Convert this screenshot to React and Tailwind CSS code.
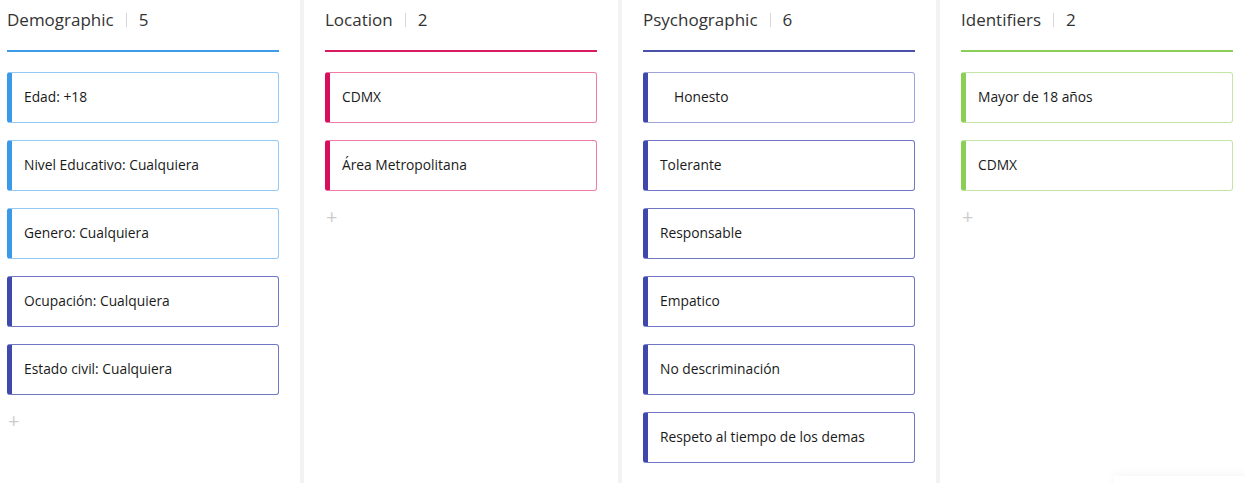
const columns = [
  {
    title: "Demographic",
    line: "bg-[#3d9be9]",
    pad: "pl-[7px] pr-[21px] w-[300px]",
    items: [
      { text: "Edad: +18", tone: "blue" },
      { text: "Nivel Educativo: Cualquiera", tone: "blue" },
      { text: "Genero: Cualquiera", tone: "blue" },
      { text: "Ocupación: Cualquiera", tone: "indigo" },
      { text: "Estado civil: Cualquiera", tone: "indigo" },
    ],
  },
  {
    title: "Location",
    line: "bg-[#d81b60]",
    pad: "px-[21px] w-[314px]",
    items: [
      { text: "CDMX", tone: "pink" },
      { text: "Área Metropolitana", tone: "pink" },
    ],
  },
  {
    title: "Psychographic",
    line: "bg-[#4a51a8]",
    pad: "px-[21px] w-[314px]",
    items: [
      { text: "Honesto", tone: "indigoSoft", indent: true },
      { text: "Tolerante", tone: "indigo" },
      { text: "Responsable", tone: "indigo" },
      { text: "Empatico", tone: "indigo" },
      { text: "No descriminación", tone: "indigo" },
      { text: "Respeto al tiempo de los demas", tone: "indigo" },
    ],
  },
  {
    title: "Identifiers",
    line: "bg-[#8bcf57]",
    pad: "pl-[21px] pr-[12px] flex-1",
    items: [
      { text: "Mayor de 18 años", tone: "green" },
      { text: "CDMX", tone: "green" },
    ],
  },
];

const tones = {
  blue: "border-[#93c9f5] border-l-[#3a9ae8]",
  indigo: "border-[#6f76c4] border-l-[#3f48ad]",
  indigoSoft: "border-[#9ea4d8] border-l-[#3f48ad]",
  pink: "border-[#f07ca8] border-l-[#d80f5c]",
  green: "border-[#c3e6a8] border-l-[#8bcf57]",
};

function Card({ text, tone, indent }) {
  return (
    <div
      className={`h-[51px] w-[272px] rounded-[3px] border border-l-[5px] bg-white flex items-center ${indent ? "pl-[26px]" : "pl-[12px]"} ${tones[tone]}`}
    >
      <span className="text-[13.8px] text-[#1a1a1a]">{text}</span>
    </div>
  );
}

function Column({ title, line, pad, items, showAdd }) {
  return (
    <div className={`${pad} shrink-0 bg-white`}>
      <div className="h-[40px] flex items-center text-[17px] text-[#333]">
        <span>{title}</span>
        <span className="mx-[12px] h-[14px] w-px bg-[#d6d6d6]"></span>
        <span>{items.length}</span>
      </div>
      <div className={`mt-[10px] h-[2px] w-[272px] ${line}`}></div>
      <div className="mt-[20px] flex flex-col gap-[17px]">
        {items.map((it) => (
          <Card key={it.text} {...it} />
        ))}
      </div>
      {showAdd && (
        <div className="mt-[17px] pl-[1px] text-[20px] leading-[18px] text-[#cccccc]">+</div>
      )}
    </div>
  );
}

export default function App() {
  return (
    <div
      className="relative flex h-[483px] w-[1245px] overflow-hidden bg-white"
      style={{ fontFamily: '"Open Sans", "Noto Sans", sans-serif' }}
    >
      {columns.map((c, i) => (
        <div key={c.title} className="flex shrink-0 last:flex-1">
          {i > 0 && <div className="w-[4px] bg-[#f3f3f3]"></div>}
          <Column {...c} showAdd={c.items.length < 6} />
        </div>
      ))}
      <div className="absolute left-[1114px] top-[476px] h-[60px] w-[160px] bg-white shadow-[0_-2px_10px_rgba(0,0,0,0.04)]"></div>
    </div>
  );
}
